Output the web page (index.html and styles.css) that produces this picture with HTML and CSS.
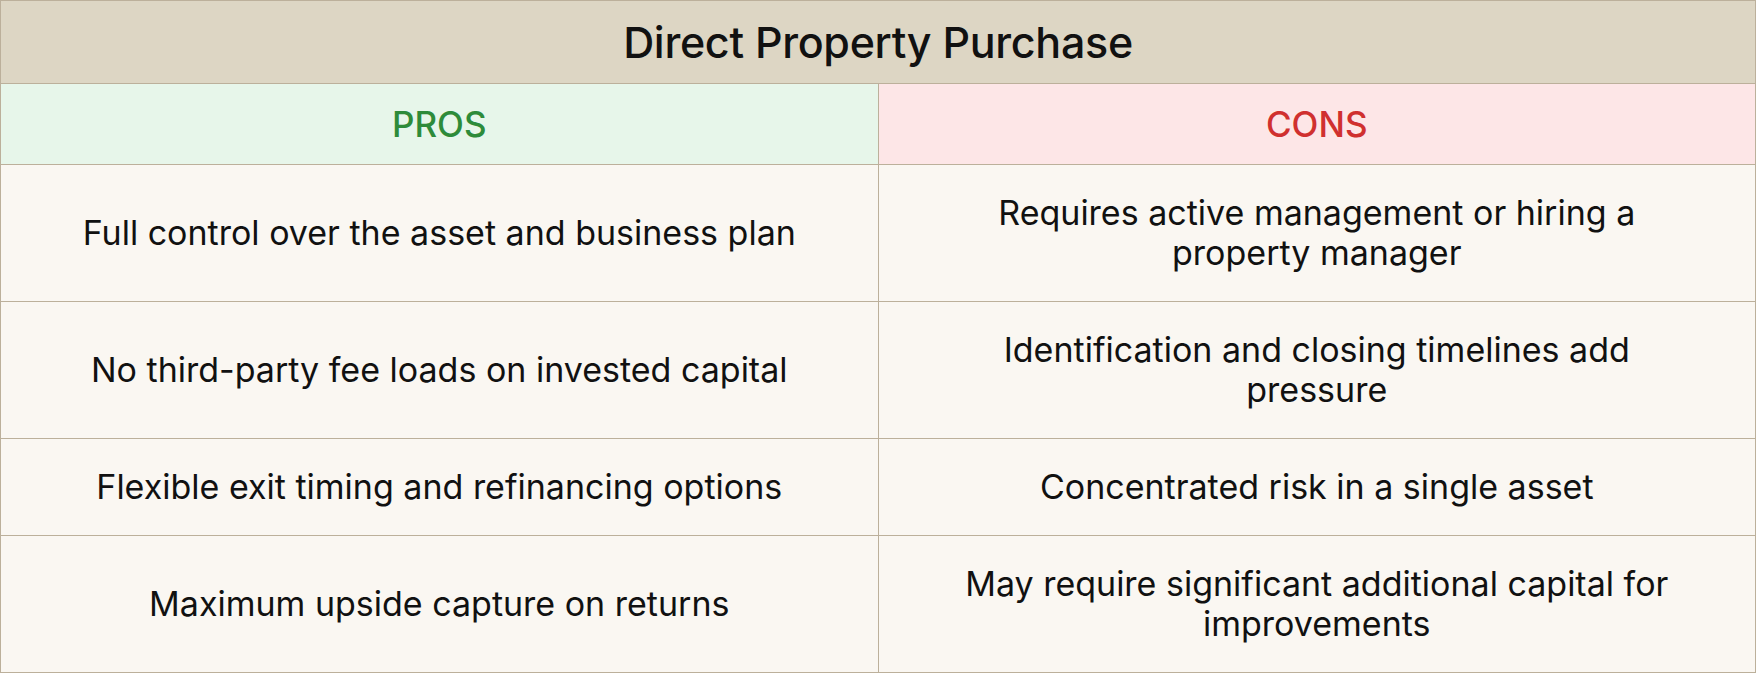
FILE: index.html
```html
<!DOCTYPE html>
<html lang="en">
<head>
<meta charset="utf-8">
<title>Direct Property Purchase</title>
<link rel="stylesheet" href="styles.css">
</head>
<body>
<div class="table">
  <div class="title">Direct Property Purchase</div>
  <div class="head pros">PROS</div>
  <div class="head cons">CONS</div>
  <div class="cell"><span>Full control over the asset and business plan</span></div>
  <div class="cell"><span>Requires active management or hiring a property manager</span></div>
  <div class="cell"><span>No third-party fee loads on invested capital</span></div>
  <div class="cell"><span>Identification and closing timelines add pressure</span></div>
  <div class="cell"><span>Flexible exit timing and refinancing options</span></div>
  <div class="cell"><span>Concentrated risk in a single asset</span></div>
  <div class="cell"><span>Maximum upside capture on returns</span></div>
  <div class="cell"><span>May require significant additional capital for improvements</span></div>
</div>
</body>
</html>
```

FILE: styles.css
```css
* { box-sizing: border-box; }
html, body { margin: 0; padding: 0; background: #faf7f2; }
.table {
  width: 1756px;
  height: 673px;
  display: grid;
  grid-template-columns: 1fr 1fr;
  grid-template-rows: 82px 80px auto auto auto auto;
  gap: 1px;
  background: #bcb09b;
  border: 1px solid #bcb09b;
  font-family: Inter, "Liberation Sans", sans-serif;
  color: #111;
}
.title {
  grid-column: 1 / 3;
  background: #ddd6c4;
  display: flex;
  align-items: center;
  justify-content: center;
  font-size: 43px;
  font-weight: 500;
  letter-spacing: -0.3px;
}
.head {
  display: flex;
  align-items: center;
  justify-content: center;
  font-size: 35px;
  font-weight: 500;
}
.pros { background: #e7f6ea; color: #2e8b3a; }
.cons { background: #fde6e7; color: #d0302f; }
.cell {
  background: #faf7f2;
  display: flex;
  align-items: center;
  justify-content: center;
  text-align: center;
  padding: 28px 60px;
  font-size: 34px;
  line-height: 40px;
}
```
